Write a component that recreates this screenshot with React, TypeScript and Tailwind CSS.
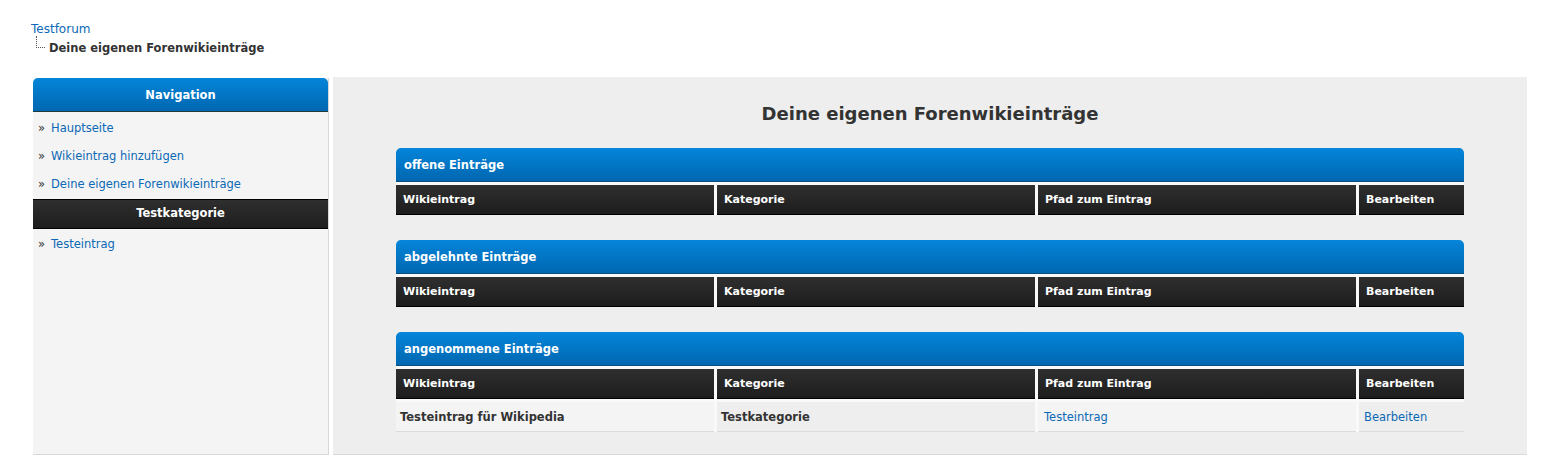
import React from 'react';

const columns = ['Wikieintrag', 'Kategorie', 'Pfad zum Eintrag', 'Bearbeiten'];

type Row = { title: string; category: string; path: string };

const sections: { title: string; rows: Row[] }[] = [
  { title: 'offene Einträge', rows: [] },
  { title: 'abgelehnte Einträge', rows: [] },
  {
    title: 'angenommene Einträge',
    rows: [{ title: 'Testeintrag für Wikipedia', category: 'Testkategorie', path: 'Testeintrag' }],
  },
];

const navLinks = ['Hauptseite', 'Wikieintrag hinzufügen', 'Deine eigenen Forenwikieinträge'];

const blueBar = 'bg-gradient-to-b from-[#0585da] to-[#0067b0]';
const darkBar = 'bg-gradient-to-b from-[#2f2f2f] via-[#262626] to-[#1d1d1d]';

const SideLink: React.FC<{ label: string }> = ({ label }) => (
  <div className="h-[28px] flex items-center pl-[5px]">
    <span className="text-[#333] w-[13px]">»</span>
    <a href="#" className="text-[#0b69b5]">
      {label}
    </a>
  </div>
);

const EntryTable: React.FC<{ title: string; rows: Row[] }> = ({ title, rows }) => (
  <div className="mb-[25px] last:mb-0">
    <div className={`${blueBar} h-[34px] pt-[2px] rounded-t-[5px] border-b border-[#0b4f80] flex items-center px-[8px] text-white font-bold text-[11.5px]`}>
      {title}
    </div>
    <div className="grid grid-cols-[318px_318px_318px_1fr] gap-[3px] pt-[3px] bg-[#f9f9f9]">
      {columns.map((c) => (
        <div
          key={c}
          className={`${darkBar} h-[30px] pt-[1px] border-b border-black flex items-center px-[7px] text-white font-bold text-[11px]`}
        >
          {c}
        </div>
      ))}
      {rows.map((r) => (
        <React.Fragment key={r.title}>
          <div className="h-[30px] pt-[2px] bg-[#f4f4f4] border-b border-[#dcdcdc] flex items-center px-[4px] font-bold text-[11.5px] text-[#333]">
            {r.title}
          </div>
          <div className="h-[30px] pt-[2px] bg-[#eeeeee] border-b border-[#dcdcdc] flex items-center px-[4px] font-bold text-[11.5px] text-[#333]">
            {r.category}
          </div>
          <div className="h-[30px] pt-[2px] bg-[#f4f4f4] border-b border-[#dcdcdc] flex items-center px-[6px]">
            <a href="#" className="text-[#0b69b5]">{r.path}</a>
          </div>
          <div className="h-[30px] pt-[2px] bg-[#eeeeee] border-b border-[#dcdcdc] flex items-center px-[5px]">
            <a href="#" className="text-[#0b69b5]">Bearbeiten</a>
          </div>
        </React.Fragment>
      ))}
    </div>
  </div>
);

const App: React.FC = () => {
  return (
    <div className="min-h-screen bg-white font-['DejaVu_Sans',sans-serif] text-[11.5px] text-[#333]">
      {/* Breadcrumb */}
      <div className="pt-[21px] pl-[31px]">
        <a href="#" className="text-[#0b69b5] text-[12px] leading-[16px] block">
          Testforum
        </a>
        <div className="flex items-start mt-[3px]">
          <div className="ml-[5px] mt-[-4px] w-[9px] h-[12px] border-l border-b border-dotted border-[#555]" />
          <span className="ml-[4px] font-bold text-[11.5px] leading-[16px]">Deine eigenen Forenwikieinträge</span>
        </div>
      </div>

      <div className="flex mt-[21px] ml-[33px] w-[1494px]">
        {/* Sidebar */}
        <div className="w-[296px] mt-px bg-[#f4f4f4] border-r border-b border-[#d8d8d8]">
          <div className={`${blueBar} h-[34px] pt-[2px] rounded-t-[5px] border-b border-[#1e3a3a] flex items-center justify-center text-white font-bold text-[11.5px]`}>
            Navigation
          </div>
          <div className="pt-[3px]">
            {navLinks.map((l) => (
              <SideLink key={l} label={l} />
            ))}
          </div>
          <div className={`${darkBar} h-[30px] border-t border-[#444] border-b border-black flex items-center justify-center text-white font-bold text-[11.5px]`}>
            Testkategorie
          </div>
          <div className="mt-[2px]">
            <SideLink label="Testeintrag" />
          </div>
        </div>

        {/* Main */}
        <div className="ml-[4px] flex-1 bg-[#eeeeee] border-b border-[#d8d8d8] pt-[25px] pb-[22px] px-[63px]">
          <h1 className="text-center font-bold text-[18px] leading-[24px] mb-[22px] text-[#333]">
            Deine eigenen Forenwikieinträge
          </h1>
          {sections.map((s) => (
            <EntryTable key={s.title} title={s.title} rows={s.rows} />
          ))}
        </div>
      </div>
    </div>
  );
};

export default App;
